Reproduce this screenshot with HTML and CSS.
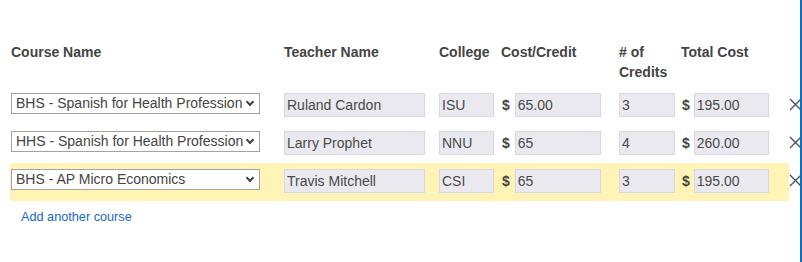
FILE: index.html
```html
<!DOCTYPE html>
<html>
<head>
<meta charset="utf-8">
<link rel="stylesheet" href="styles.css">
</head>
<body>
<div class="page">
  <div class="courses">
    <div class="head">
      <div>Course Name</div>
      <div>Teacher Name</div>
      <div>College</div>
      <div>Cost/Credit</div>
      <div># of<br>Credits</div>
      <div>Total Cost</div>
    </div>

    <div class="row">
      <div class="cells">
        <div class="sel-wrap"><select class="sel"><option>BHS - Spanish for Health Professions</option></select></div>
        <div><input class="inp w-teacher" value="Ruland Cardon" readonly></div>
        <div><input class="inp w-college" value="ISU" readonly></div>
        <div class="money"><span class="dollar">$</span><input class="inp w-cost" value="65.00" readonly></div>
        <div><input class="inp w-credits" value="3" readonly></div>
        <div class="money tight"><span class="dollar">$</span><input class="inp w-total" value="195.00" readonly></div>
      </div>
      <button class="remove" aria-label="Remove"><svg width="13" height="13" viewBox="0 0 13 13"><path d="M1 1 L12 12 M12 1 L1 12" stroke="#4b5662" stroke-width="1.4" fill="none"/></svg></button>
    </div>

    <div class="row">
      <div class="cells">
        <div class="sel-wrap"><select class="sel"><option>HHS - Spanish for Health Professions</option></select></div>
        <div><input class="inp w-teacher" value="Larry Prophet" readonly></div>
        <div><input class="inp w-college" value="NNU" readonly></div>
        <div class="money"><span class="dollar">$</span><input class="inp w-cost" value="65" readonly></div>
        <div><input class="inp w-credits" value="4" readonly></div>
        <div class="money tight"><span class="dollar">$</span><input class="inp w-total" value="260.00" readonly></div>
      </div>
      <button class="remove" aria-label="Remove"><svg width="13" height="13" viewBox="0 0 13 13"><path d="M1 1 L12 12 M12 1 L1 12" stroke="#4b5662" stroke-width="1.4" fill="none"/></svg></button>
    </div>

    <div class="row">
      <div class="cells highlight">
        <div class="sel-wrap"><select class="sel"><option>BHS - AP Micro Economics</option></select></div>
        <div><input class="inp w-teacher" value="Travis Mitchell" readonly></div>
        <div><input class="inp w-college" value="CSI" readonly></div>
        <div class="money"><span class="dollar">$</span><input class="inp w-cost" value="65" readonly></div>
        <div><input class="inp w-credits" value="3" readonly></div>
        <div class="money tight"><span class="dollar">$</span><input class="inp w-total" value="195.00" readonly></div>
      </div>
      <button class="remove" aria-label="Remove"><svg width="13" height="13" viewBox="0 0 13 13"><path d="M1 1 L12 12 M12 1 L1 12" stroke="#4b5662" stroke-width="1.4" fill="none"/></svg></button>
    </div>

    <a class="add" href="#">Add another course</a>
  </div>
</div>
</body>
</html>
```

FILE: styles.css
```css
html, body {
  margin: 0;
  padding: 0;
  background: #fff;
}

.page {
  box-sizing: border-box;
  width: 802px;
  height: 262px;
  border-right: 2px solid #0a6fc2;
  overflow: hidden;
  font-family: "Liberation Sans", Arial, sans-serif;
  color: #444;
}

.courses {
  padding: 42px 0 0 10px;
}

.head,
.cells {
  display: grid;
  grid-template-columns: 273px 155px 62px 118px 62px 108px;
  padding-left: 1px;
}

.head {
  font-weight: bold;
  font-size: 14px;
  line-height: 20px;
  height: 40px;
  margin-bottom: 5px;
  align-items: start;
}

.row {
  display: flex;
  align-items: stretch;
}

.cells {
  width: 779px;
  box-sizing: border-box;
  height: 38px;
  padding-top: 6px;
  align-items: start;
}

.highlight {
  background: #fff4b6;
}

.sel-wrap {
  position: relative;
  width: 249px;
}

.sel-wrap::after {
  content: "";
  position: absolute;
  right: 7px;
  top: 6px;
  width: 4px;
  height: 4px;
  border-right: 2px solid #444;
  border-bottom: 2px solid #444;
  transform: rotate(45deg);
  pointer-events: none;
}

.sel {
  -webkit-appearance: none;
  appearance: none;
  box-sizing: border-box;
  width: 249px;
  height: 21px;
  margin: 0;
  padding: 0 16px 0 4px;
  border: 1px solid #a3a3a3;
  border-radius: 0;
  background: #fff;
  font-family: inherit;
  font-size: 14px;
  color: #444;
  line-height: 19px;
}

.inp {
  box-sizing: border-box;
  height: 24px;
  margin: 0;
  padding: 1px 2px;
  border: 1px solid #d8d8e0;
  background: #eae9f0;
  font-family: inherit;
  font-size: 14px;
  color: #4a4a4a;
  outline: none;
}

.w-teacher { width: 141px; }
.w-college { width: 55px; }
.w-cost { width: 86px; }
.w-credits { width: 56px; }
.w-total { width: 75px; }

.money {
  display: flex;
  align-items: center;
  gap: 5px;
  padding-left: 1px;
}

.money.tight {
  gap: 4px;
}

.dollar {
  font-weight: bold;
  font-size: 14px;
  color: #444;
}

.remove {
  border: 0;
  background: none;
  padding: 11px 0 0 0;
  margin: 0;
  width: 14px;
  display: flex;
  align-items: flex-start;
  justify-content: flex-start;
  cursor: pointer;
}

.add {
  display: inline-block;
  margin: 9px 0 0 11px;
  font-size: 12.7px;
  line-height: 14px;
  color: #1a67c8;
  text-decoration: none;
}
```
